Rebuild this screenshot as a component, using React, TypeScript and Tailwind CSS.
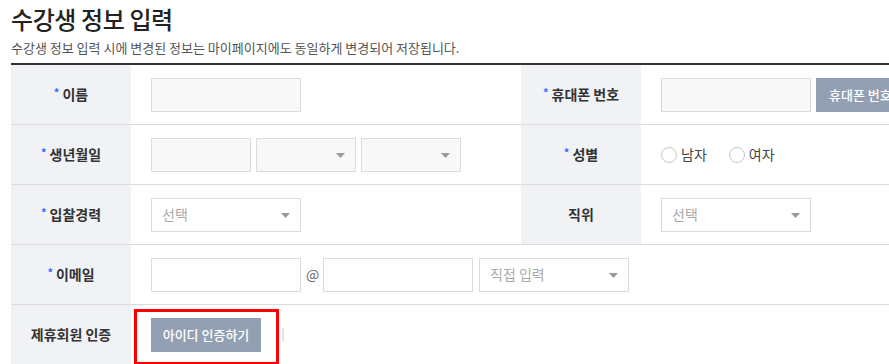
const font = { fontFamily: '"Noto Sans CJK KR", "Noto Sans", sans-serif' };

function Label({ text, required = true }: { text: string; required?: boolean }) {
  return (
    <div className="flex items-center justify-center bg-[#f1f2f6] text-[14px] font-bold text-[#333]">
      {required && <span className="mr-[3px] -mt-[4px] text-[11px] text-[#2f6bff]">*</span>}
      {text}
    </div>
  );
}

function Input({ w = "w-[150px]", white = false }: { w?: string; white?: boolean }) {
  return <div className={`${w} h-[34px] border border-[#dcdcdc] ${white ? "bg-white" : "bg-[#f8f8f8]"}`} />;
}

function Select({ placeholder, w = "w-[150px]", disabled = false }: { placeholder?: string; w?: string; disabled?: boolean }) {
  return (
    <div
      className={`${w} h-[34px] flex items-center justify-between border border-[#dcdcdc] pl-[10px] pr-[10px] text-[14px] text-[#aaa] ${
        disabled ? "bg-[#f8f8f8]" : "bg-white"
      }`}
    >
      <span>{placeholder}</span>
      <svg width="9" height="5" viewBox="0 0 9 5" className="mt-[1px]">
        <path d="M0 0h9L4.5 5z" fill="#999" />
      </svg>
    </div>
  );
}

function Radio({ label }: { label: string }) {
  return (
    <div className="flex items-center gap-[4px]">
      <span className="w-[16px] h-[16px] rounded-full border border-[#c4c4c4] bg-white" />
      <span className="text-[14px] text-[#444]">{label}</span>
    </div>
  );
}

function Value({ children, span = false }: { children: React.ReactNode; span?: boolean }) {
  return <div className={`flex items-center gap-[5px] pl-[20px] ${span ? "col-span-3" : ""}`}>{children}</div>;
}

export default function App() {
  return (
    <div className="w-[889px] h-[364px] overflow-hidden bg-white pl-[11px] pt-[3px]" style={font}>
      <h1 className="text-[24px] font-medium leading-[32px] text-[#222] tracking-[-0.4px]">수강생 정보 입력</h1>
      <p className="mt-[4px] text-[13px] leading-[18px] text-[#555]">
        수강생 정보 입력 시에 변경된 정보는 마이페이지에도 동일하게 변경되어 저장됩니다.
      </p>

      <div className="relative mt-[6px] w-[1000px] border-t-2 border-[#333]">
        <div className="grid grid-cols-[120px_390px_120px_1fr] auto-rows-[60px] [&>*]:border-b [&>*]:border-[#dcdcdc]">
          <Label text="이름" />
          <Value>
            <Input />
          </Value>
          <Label text="휴대폰 번호" />
          <Value>
            <Input />
            <button className="h-[34px] px-[13px] bg-[#939fb2] text-[13px] font-medium text-white whitespace-nowrap">
              휴대폰 번호 인증
            </button>
          </Value>

          <Label text="생년월일" />
          <Value>
            <Input w="w-[100px]" />
            <Select w="w-[100px]" disabled />
            <Select w="w-[100px]" disabled />
          </Value>
          <Label text="성별" />
          <Value>
            <div className="flex items-center gap-[22px]">
              <Radio label="남자" />
              <Radio label="여자" />
            </div>
          </Value>

          <Label text="입찰경력" />
          <Value>
            <Select placeholder="선택" />
          </Value>
          <Label text="직위" required={false} />
          <Value>
            <Select placeholder="선택" />
          </Value>

          <Label text="이메일" />
          <Value span>
            <Input white />
            <span className="w-[12px] text-[14px] text-[#666]">@</span>
            <Input white />
            <div className="ml-px">
              <Select placeholder="직접 입력" />
            </div>
          </Value>

          <Label text="제휴회원 인증" required={false} />
          <Value span>
            <button className="h-[34px] w-[110px] bg-[#939fb2] text-[13px] font-medium text-white">아이디 인증하기</button>
            <span className="ml-[16px] w-[2px] h-[13px] bg-[#e2e2e2]" />
          </Value>
        </div>

        <div className="absolute left-[123px] top-[244px] w-[145px] h-[56px] border-[3px] border-[#ff0000]" />
      </div>
    </div>
  );
}
